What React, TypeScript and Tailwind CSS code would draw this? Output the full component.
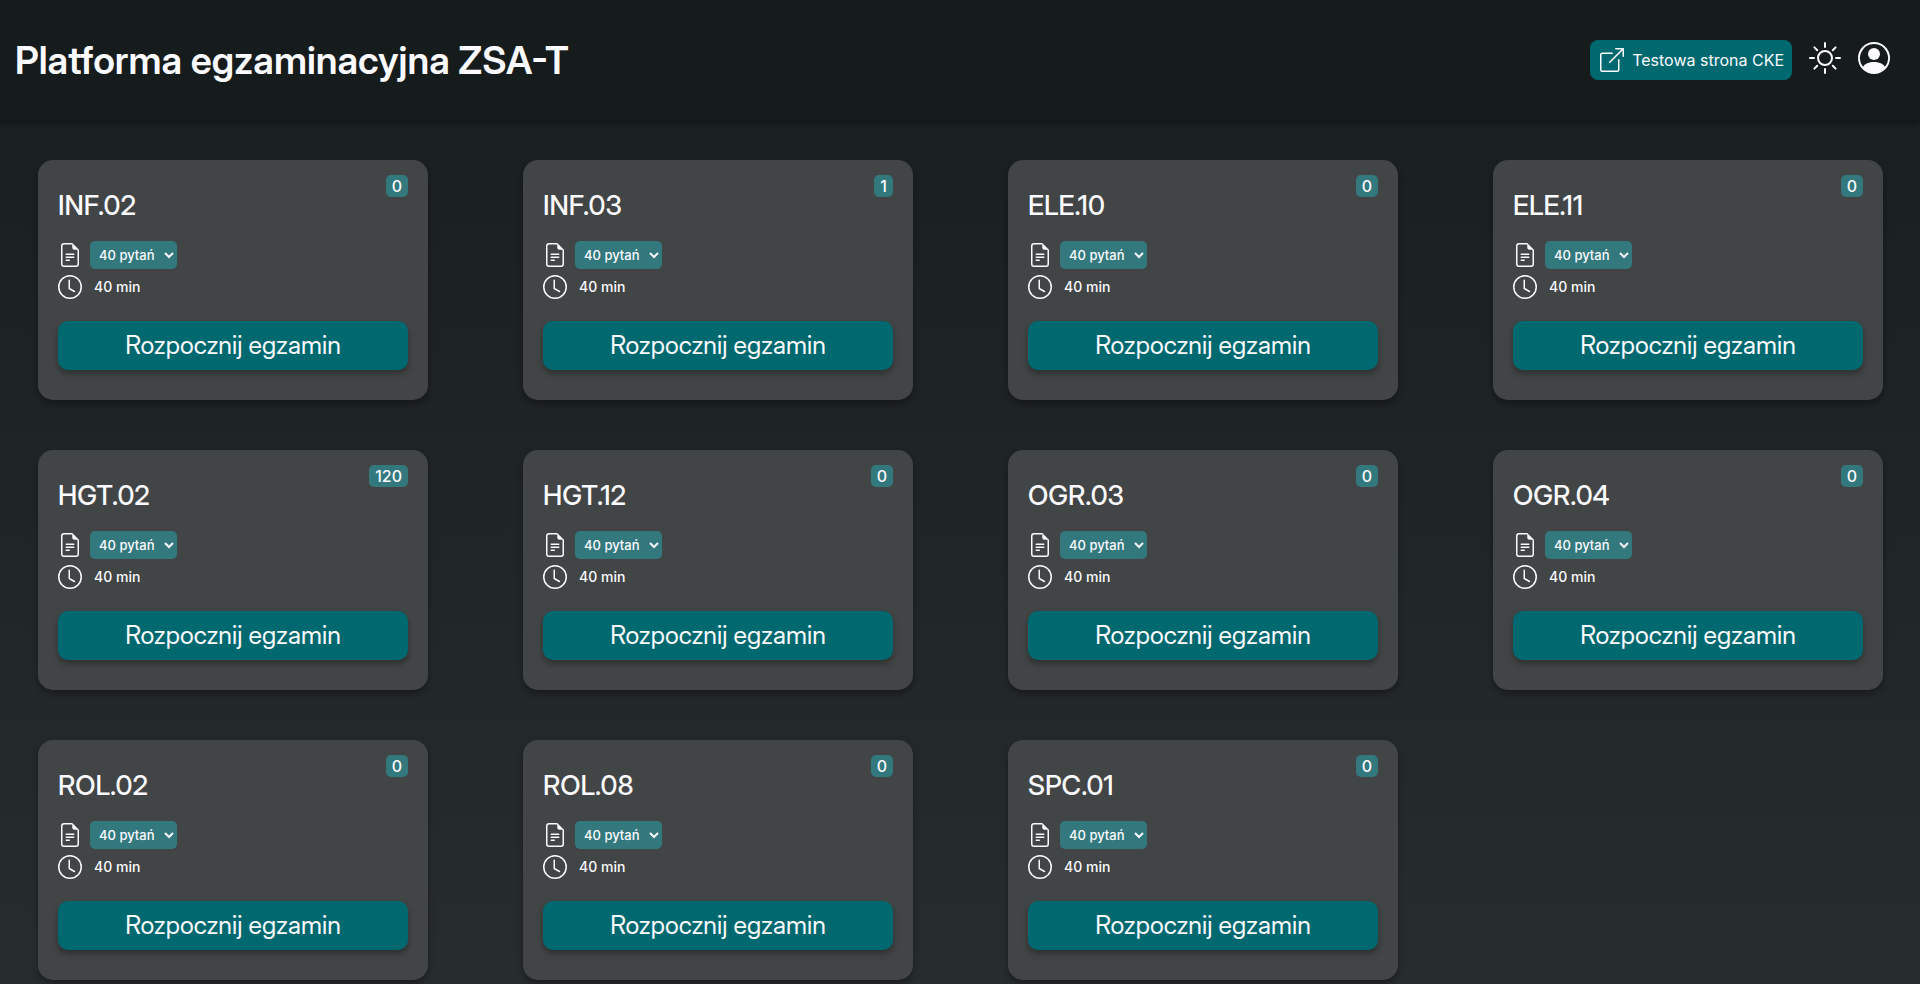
import { BsBoxArrowUpRight, BsClock, BsFileEarmarkText, BsPersonCircle, BsSun } from "react-icons/bs";

type Exam = { code: string; count: number };

const exams: Exam[] = [
  { code: "INF.02", count: 0 },
  { code: "INF.03", count: 1 },
  { code: "ELE.10", count: 0 },
  { code: "ELE.11", count: 0 },
  { code: "HGT.02", count: 120 },
  { code: "HGT.12", count: 0 },
  { code: "OGR.03", count: 0 },
  { code: "OGR.04", count: 0 },
  { code: "ROL.02", count: 0 },
  { code: "ROL.08", count: 0 },
  { code: "SPC.01", count: 0 },
];

function Header() {
  return (
    <header className="flex min-h-[120px] items-center justify-between bg-[#161b1b] pr-[30px] pl-[15px] shadow-[0_2px_6px_rgba(0,0,0,0.35)]">
      <h1 className="font-['Inter_Display','Inter',sans-serif] text-[38px] leading-[46px] font-semibold">
        Platforma egzaminacyjna ZSA-T
      </h1>
      <div className="flex items-center gap-[17px]">
        <a
          href="#cke"
          className="flex h-10 items-center gap-2 rounded-lg bg-[#00696f] pr-2 pl-2.5 text-base"
        >
          <BsBoxArrowUpRight className="size-6" aria-hidden="true" />
          Testowa strona CKE
        </a>
        <button type="button" aria-label="Jasny motyw" className="pb-1">
          <BsSun className="size-8" />
        </button>
        <button type="button" aria-label="Konto" className="pb-1">
          <BsPersonCircle className="size-8" />
        </button>
      </div>
    </header>
  );
}

function ExamCard({ code, count }: Exam) {
  const selectId = `questions-${code}`;
  return (
    <article className="relative rounded-[15px] bg-[#424545] px-5 pt-7 pb-[30px] shadow-[0_4px_6px_rgba(0,0,0,0.3)]">
      <span className="absolute top-[15px] right-5 rounded-[5px] bg-[#32787d] px-1.5 text-center text-base leading-[22px] font-medium">
        {count}
      </span>
      <h2 className="font-['Inter_Display','Inter',sans-serif] text-[27px] leading-9 font-medium">
        {code}
      </h2>
      <div className="mt-[17px] flex items-center gap-2">
        <label htmlFor={selectId} aria-label="Liczba pytań">
          <BsFileEarmarkText className="size-6" />
        </label>
        <select
          id={selectId}
          className="h-7 rounded-[5px] bg-[#32787d] pr-1.5 pl-[5px] text-[13px] font-medium"
        >
          <option>40 pytań</option>
        </select>
      </div>
      <div className="mt-1.5 flex items-center gap-3 text-sm leading-6 font-medium">
        <BsClock className="size-6" aria-hidden="true" />
        40 min
      </div>
      <button
        type="button"
        className="mt-[22px] h-[49px] w-full rounded-[10px] bg-[#00696f] font-['Inter_Display','Inter',sans-serif] text-[25px] shadow-[0_4px_6px_rgba(0,0,0,0.3)]"
      >
        Rozpocznij egzamin
      </button>
    </article>
  );
}

export default function App() {
  return (
    <div className="min-h-screen bg-linear-to-b from-[#181d20] via-[#1f2424] to-[#272c2c] font-['Inter',sans-serif] text-[#fafaff]">
      <Header />
      <main className="grid grid-cols-[repeat(auto-fill,390px)] justify-between gap-x-[50px] gap-y-[50px] pt-10 pr-[37px] pb-1 pl-[38px]">
        {exams.map((exam) => (
          <ExamCard key={exam.code} {...exam} />
        ))}
      </main>
    </div>
  );
}
